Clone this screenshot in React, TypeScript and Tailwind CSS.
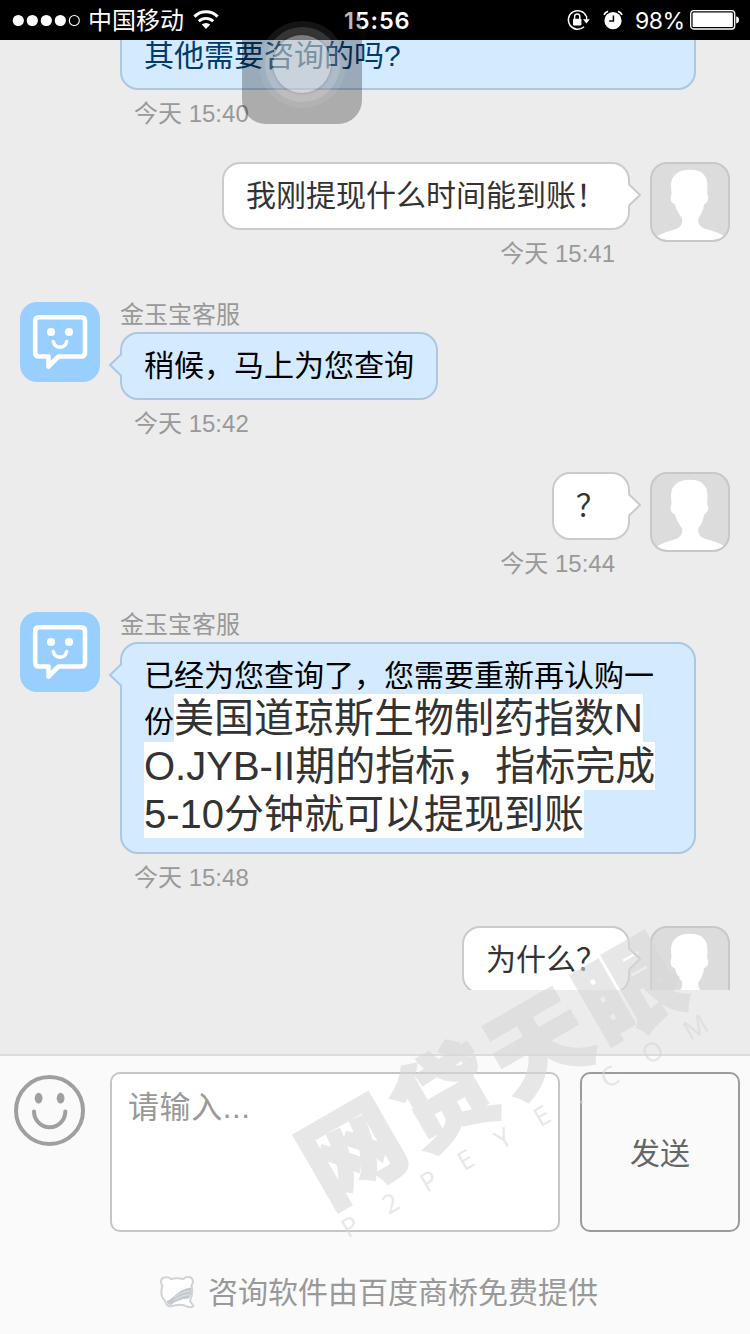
import type { ReactNode } from 'react';

type MessageProps = {
  name?: string;
  time?: string;
  children: ReactNode;
};

function StatusBar() {
  return (
    <header className="relative h-10 bg-black text-white flex items-center shrink-0">
      <svg className="ml-3 w-[69px] h-3" viewBox="0 0 69 12">
        {[6.3, 20.3, 34.3, 48.3].map((cx) => (
          <circle key={cx} cx={cx} cy="6.5" r="5.6" fill="#fff" />
        ))}
        <circle cx="62.3" cy="6.5" r="5" fill="none" stroke="#fff" strokeWidth="1.1" />
      </svg>
      <span className="ml-[7px] w-24 pt-0.5 text-[24px] leading-10 whitespace-nowrap">中国移动</span>
      <svg className="ml-[9px] w-[26px] h-5" viewBox="0 0 26 20">
        <path d="M1.4 6.6a16.6 16.6 0 0 1 23.2 0" fill="none" stroke="#fff" strokeWidth="3" />
        <path d="M5.8 11.3a10.3 10.3 0 0 1 14.4 0" fill="none" stroke="#fff" strokeWidth="2.8" />
        <path d="M8.8 14.6a6 6 0 0 1 8.4 0L13 19z" fill="#fff" />
      </svg>
      <span className="absolute left-[344px] top-0 pt-px leading-10 text-[23.5px] font-semibold font-[Inter] tracking-[0.9px]">15:56</span>
      <svg className="ml-auto w-6 h-6" viewBox="0 0 24 24">
        <path d="M19.2 8.2A9.3 9.3 0 1 0 17 18.8" fill="none" stroke="#fff" strokeWidth="1.5" />
        <path d="M19.6 8v5" stroke="#fff" strokeWidth="1.3" />
        <path d="M16 11.2h6.8l-3.4 4.3z" fill="#fff" />
        <rect x="6" y="10.8" width="8.4" height="6.6" rx="0.8" fill="#fff" />
        <path d="M7.6 11V8.6a2.6 2.6 0 0 1 5.2 0V11" fill="none" stroke="#fff" strokeWidth="1.4" />
      </svg>
      <svg className="ml-3 w-5 h-5" viewBox="0 0 20 20">
        <circle cx="10" cy="10.7" r="8.6" fill="#fff" />
        <path d="M1 4.8A6 6 0 0 1 5 1.4M19 4.8A6 6 0 0 0 15 1.4" stroke="#fff" strokeWidth="1.8" fill="none" />
        <path d="M10.4 5.5v5.6H6.2" stroke="#000" strokeWidth="1.5" fill="none" />
      </svg>
      <span className="ml-3 w-[49px] pt-0.5 text-[23px] leading-10 whitespace-nowrap font-[Inter] tracking-[-0.5px]">98%</span>
      <svg className="ml-[6px] mr-[10px] w-[50px] h-5" viewBox="0 0 50 20">
        <rect x="0.7" y="0.7" width="44" height="18.3" rx="3" fill="none" stroke="#fff" strokeWidth="1.3" />
        <rect x="2.6" y="2.6" width="40.2" height="14.5" rx="1.2" fill="#fff" />
        <path d="M46.2 6.6q2.8.4 2.8 3.4t-2.8 3.4z" fill="#fff" />
      </svg>
    </header>
  );
}

function ServiceAvatar() {
  return (
    <svg className="w-20 h-20 shrink-0" viewBox="0 0 80 80">
      <rect width="80" height="80" rx="17" fill="#99cfff" />
      <path
        d="M19 15.2H61Q65 15.2 65 19V50.5Q65 54.5 61 54.5H38.5L28.5 64.5V54.5H19Q15.2 54.5 15.2 50.5V19Q15.2 15.2 19 15.2Z"
        fill="none"
        stroke="#fff"
        strokeWidth="4.6"
        strokeLinejoin="round"
      />
      <circle cx="31" cy="30" r="4.1" fill="#fff" />
      <circle cx="49" cy="30" r="4.1" fill="#fff" />
      <path d="M33.3 39.5a6.8 6.8 0 0 0 13.4 0" fill="none" stroke="#fff" strokeWidth="3.6" strokeLinecap="round" />
    </svg>
  );
}

function UserAvatar() {
  return (
    <svg className="w-20 h-20 shrink-0" viewBox="0 0 80 80">
      <rect x="1" y="1" width="78" height="78" rx="16" fill="#dcdcdc" />
      <path
        d="M40 7.7C28 7.7 21 13.5 21 23.5L21.5 32.5C20 34 20.5 39.5 22.5 41L25 42.5C26 48 29.5 52.5 32 56C33 61 31 65 26 67C18 69.5 11 71.5 7 74.5Q12 78 18 78H63Q69 78 74 74C70 71 62 69 54.5 66.5C49.5 64.5 47.5 61 48.5 56C51 52.5 53.5 48 54 42.5L56 41C58.5 39 59 34.5 57.2 32.5L57.5 23.5C57.5 13.5 52 7.7 40 7.7Z"
        fill="#fff"
      />
      <rect x="1" y="1" width="78" height="78" rx="16" fill="none" stroke="#c8c8c8" strokeWidth="2" />
    </svg>
  );
}

function ServiceMessage({ name, time, children }: MessageProps) {
  return (
    <div className="flex px-5 mb-6 shrink-0">
      <ServiceAvatar />
      <div className="ml-5">
        <div className="h-[30px] leading-[25px] text-[24px] text-[#999]">{name}</div>
        <div className="relative w-fit min-h-[68px] border-2 border-[#abc7e3] bg-[#d4eaff] rounded-[18px] px-[22px] py-[14px] text-[30px] leading-9 text-black">
          <svg className="absolute -left-[14px] top-[19px] w-[15px] h-6" viewBox="0 0 15 24">
            <path d="M15 0L13 2L1.5 12L13 23L15 24Z" fill="#d4eaff" />
            <path d="M13.5 1L2 12L13.5 23" fill="none" stroke="#abc7e3" strokeWidth="2" />
          </svg>
          {children}
        </div>
        <div className="h-12 leading-[48px] pl-[14px] text-[24px] text-[#999]">{time}</div>
      </div>
    </div>
  );
}

function UserMessage({ time, children }: MessageProps) {
  return (
    <div className="flex justify-end px-5 mb-6 shrink-0">
      <div className="mr-5 flex flex-col items-end">
        <div className="relative h-[68px] border-2 border-[#cbcbcb] bg-white rounded-[18px] px-[22px] py-[14px] text-[30px] leading-9 text-[#333] whitespace-nowrap">
          {children}
          <svg className="absolute -right-[14px] top-[19px] w-[15px] h-6" viewBox="0 0 15 24">
            <path d="M0 0L2 1L13.5 12L2 23L0 24Z" fill="#fff" />
            <path d="M1.5 1L13 12L1.5 23" fill="none" stroke="#cbcbcb" strokeWidth="2" />
          </svg>
        </div>
        <div className="h-12 leading-[48px] pr-[15px] text-[24px] text-[#999] whitespace-nowrap">{time}</div>
      </div>
      <UserAvatar />
    </div>
  );
}

function InputBar() {
  return (
    <footer className="h-[280px] shrink-0 border-t-2 border-[#dcdcdc] bg-[#fafafa]">
      <div className="flex pt-4 pr-[10px]">
        <svg className="mt-[3px] ml-[14px] w-[71px] h-[71px]" viewBox="0 0 71 71" fill="none" stroke="#9f9f9f">
          <circle cx="35.5" cy="35.5" r="33.5" strokeWidth="4" />
          <ellipse cx="24.6" cy="23.2" rx="3.9" ry="5.4" fill="#9f9f9f" stroke="none" />
          <ellipse cx="46.6" cy="23.2" rx="3.9" ry="5.4" fill="#9f9f9f" stroke="none" />
          <path d="M20 36.5a15.65 15.8 0 0 0 31.3 0" strokeWidth="4" strokeLinecap="round" />
        </svg>
        <textarea
          className="ml-[25px] w-[450px] h-40 rounded-[10px] border-2 border-[#c6c6c6] bg-white px-4 pt-[13px] text-[31px] leading-[42px] tracking-[0.6px] resize-none outline-none placeholder:text-[#999]"
          placeholder="请输入..."
        />
        <button className="ml-5 w-40 h-40 pt-[3px] rounded-[10px] border-2 border-[#9b9b9b] text-[30px] text-[#666]">发送</button>
      </div>
      <div className="mt-[37px] pl-[159px] h-[46px] flex items-center">
        <svg className="w-[36px] h-[34px]" viewBox="0 0 36 34">
          <path
            d="M6 2.5C1.5 2.5 0.8 8 3.4 10.5C1.8 16 2.4 22 5.5 25C7 30.5 10 32.5 15 30.5Q23 28.5 28 31.5Q33 33 34.5 31L31 26Q34.5 18 32.5 10.5C35.5 7 33.5 1.5 29 2Q26 2 24.5 4Q18 2.6 12 4Q9.5 1.5 6 2.5Z"
            fill="#fff"
            stroke="#cfd2d6"
            strokeWidth="2"
            strokeLinejoin="round"
          />
          <path d="M7.5 26C15 24 18 14.5 32 12.5Q33 19 30 23.5Q19 24 12 30Q8.5 30 7.5 26Z" fill="#c3c9cf" />
          <path d="M16 22Q22 16.5 31 16M15 25Q22 20 31 19.5" fill="none" stroke="#dfe3e6" strokeWidth="1" />
        </svg>
        <span className="ml-[13px] text-[30px] text-[#999] whitespace-nowrap">咨询软件由百度商桥免费提供</span>
      </div>
    </footer>
  );
}

function AssistiveTouch() {
  return (
    <div className="absolute left-[242px] top-1 w-[120px] h-[120px] rounded-[24px] bg-black/27 flex items-center justify-center">
      <div className="w-[87px] h-[87px] rounded-full bg-white/8 flex items-center justify-center">
        <div className="w-[75px] h-[75px] rounded-full bg-white/14 flex items-center justify-center">
          <div className="w-[58px] h-[58px] rounded-full bg-white/35 shadow-[0_0_3px_rgba(0,0,0,0.25)]" />
        </div>
      </div>
    </div>
  );
}

function Watermark() {
  return (
    <svg
      className="absolute left-[280px] top-[900px] w-[470px] h-[360px] pointer-events-none"
      viewBox="0 0 470 360"
      fill="#d7d7d7"
      opacity="0.58"
    >
      <g transform="translate(70 252) rotate(-30)">
        <text
          x="-47 60 168 274"
          y="37"
          fontSize="99"
          fontWeight="900"
          stroke="#d7d7d7"
          strokeWidth="3"
        >
          网贷天眼
        </text>
        <text
          x="-45 2 46 89 132 177 222 254 302 350"
          y="74"
          fontSize="26"
          className="font-['Open_Sans']"
        >
          P2PEYE.COM
        </text>
      </g>
    </svg>
  );
}

export default function App() {
  return (
    <div
      lang="zh-CN"
      className="relative w-[750px] h-[1334px] overflow-hidden flex flex-col bg-[#ececec] font-['Liberation_Sans','Noto_Sans_CJK_SC',sans-serif]"
    >
      <StatusBar />

      {/* Conversation */}
      <main className="h-[950px] mb-16 shrink-0 overflow-hidden flex flex-col">
        <div className="-mt-[18px] ml-[120px] mb-6 shrink-0">
          <div className="w-[576px] h-[68px] border-2 border-[#abc7e3] bg-[#d4eaff] rounded-[18px] px-[22px] py-[14px] text-[30px] leading-9 text-[#003b6d]">
            其他需要咨询的吗?
          </div>
          <div className="h-12 leading-[48px] pl-[14px] text-[24px] text-[#999]">今天 15:40</div>
        </div>

        <UserMessage time="今天 15:41">我刚提现什么时间能到账！</UserMessage>

        <ServiceMessage name="金玉宝客服" time="今天 15:42">稍候，马上为您查询</ServiceMessage>

        <UserMessage time="今天 15:44">？</UserMessage>

        <ServiceMessage name="金玉宝客服" time="今天 15:48">
          <div className="w-[528px] whitespace-nowrap">
            <div>已经为您查询了，您需要重新再认购一</div>
            <div className="h-12 flex items-baseline">
              <span>份</span>
              <span className="bg-white text-[40px] leading-[48px] text-[#333]">美国道琼斯生物制药指数N</span>
            </div>
            <div className="w-fit h-12 bg-white text-[40px] leading-[48px] text-[#333]">O.JYB-II期的指标，指标完成</div>
            <div className="w-fit h-12 bg-white text-[40px] leading-[48px] text-[#333]">5-10分钟就可以提现到账</div>
          </div>
        </ServiceMessage>

        <UserMessage>为什么？</UserMessage>
      </main>

      <InputBar />
      <AssistiveTouch />
      <Watermark />
    </div>
  );
}
